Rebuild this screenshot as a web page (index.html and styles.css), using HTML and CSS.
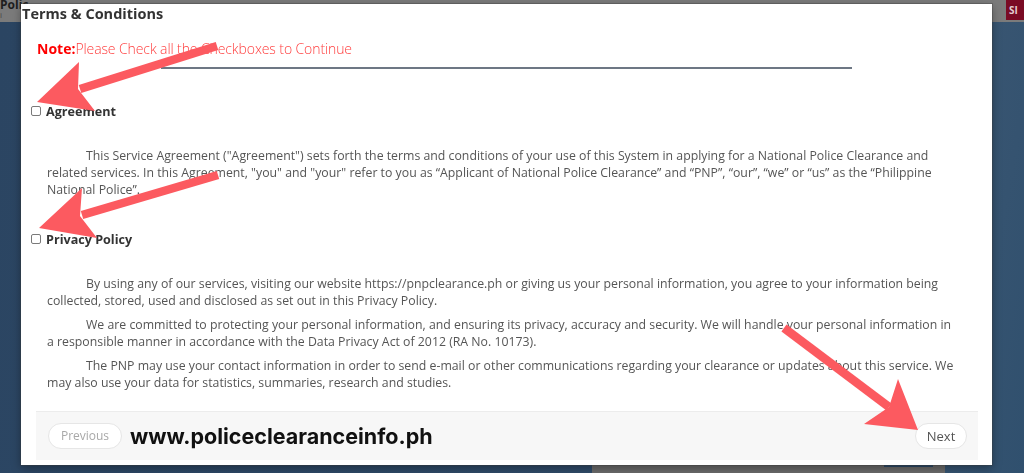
FILE: index.html
```html
<!DOCTYPE html>
<html lang="en">
<head>
<meta charset="utf-8">
<title>Terms &amp; Conditions</title>
<link rel="stylesheet" href="styles.css">
</head>
<body>
<div class="page">
  <header class="topbar">
    <div class="brand">Polic<span class="brand-sub">i</span></div>
    <button class="signin">SI</button>
  </header>
  <main class="backdrop-content">
    <div class="bg-card">
      <span class="bg-label">Middle Name</span>
      <span class="bg-insert">Insert N</span>
    </div>
  </main>
</div>

<div class="modal">
  <h4 class="modal-title">Terms &amp; Conditions</h4>
  <p class="note"><b>Note:</b><span class="note-text">Please Check all the Checkboxes to Continue</span></p>
  <div class="rule"></div>

  <label class="check-row first"><input type="checkbox" class="box"><span>Agreement</span></label>
  <div class="terms">
    <p>This Service Agreement ("Agreement") sets forth the terms and conditions of your use of this System in applying for a National Police Clearance and related services. In this Agreement, "you" and "your" refer to you as “Applicant of National Police Clearance” and “PNP”, “our”, “we” or “us” as the “Philippine National Police”.</p>
  </div>

  <label class="check-row second"><input type="checkbox" class="box"><span>Privacy Policy</span></label>
  <div class="terms">
    <p>By using any of our services, visiting our website https://pnpclearance.ph or giving us your personal information, you agree to your information being collected, stored, used and disclosed as set out in this Privacy Policy.</p>
    <p>We are committed to protecting your personal information, and ensuring its privacy, accuracy and security. We will handle your personal information in a responsible manner in accordance with the Data Privacy Act of 2012 (RA No. 10173).</p>
    <p>The PNP may use your contact information in order to send e-mail or other communications regarding your clearance or updates about this service. We may also use your data for statistics, summaries, research and studies.</p>
  </div>

  <div class="modal-footer">
    <div class="footer-left">
      <button class="pill prev">Previous</button>
      <span class="watermark">www.policeclearanceinfo.ph</span>
    </div>
    <button class="pill next">Next</button>
  </div>
</div>

<svg class="arrows" width="1024" height="473" viewBox="0 0 1024 473" aria-hidden="true">
  <g fill="#fc5a60" stroke="none">
    <line x1="217" y1="46" x2="80" y2="89" stroke="#fc5a60" stroke-width="8.5"/>
    <polygon points="37,102 95,111 78,89 79,62"/>
    <line x1="218" y1="175" x2="82" y2="215" stroke="#fc5a60" stroke-width="8.5"/>
    <polygon points="39,228 97,238 80,216 82,188"/>
    <line x1="784" y1="328" x2="889" y2="407" stroke="#fc5a60" stroke-width="8.5"/>
    <polygon points="918,430 864,424 889,407 898,379"/>
  </g>
</svg>
</body>
</html>
```

FILE: styles.css
```css
html, body {
  margin: 0;
  padding: 0;
  width: 1024px;
  height: 473px;
  overflow: hidden;
  font-family: "Open Sans", "Liberation Sans", Arial, sans-serif;
}

.page {
  display: flex;
  flex-direction: column;
  height: 473px;
}

.topbar {
  height: 34px;
  background: #7b7b7b;
  display: flex;
  justify-content: space-between;
  align-items: flex-start;
}

.brand {
  font-weight: 700;
  font-size: 12px;
  line-height: 11px;
  color: #1e1e1e;
  display: flex;
  flex-direction: column;
  margin-top: -1px;
}

.brand-sub {
  font-size: 8px;
  font-weight: 400;
  color: #444;
  line-height: 10px;
}

.signin {
  margin: 0;
  width: 18px;
  height: 20px;
  padding: 0 0 0 3px;
  border: 0;
  background: #7a0a24;
  color: #e3cdd2;
  font: 700 10px/20px "Open Sans", sans-serif;
  overflow: hidden;
  white-space: nowrap;
  text-align: left;
}

.backdrop-content {
  flex: 1;
  background: linear-gradient(100deg, #2b4562 0%, #2f4b69 60%, #3a5672 88%, #30506e 100%);
  display: flex;
  align-items: flex-start;
}

.bg-card {
  margin: 431px 0 0 592px;
  width: 353px;
  height: 20px;
  background: #6b6b6b;
  display: flex;
  justify-content: space-between;
  align-items: flex-start;
  padding: 0 12px 0 11px;
  box-sizing: border-box;
}

.bg-label {
  font: 700 12px/12px "Open Sans", sans-serif;
  color: #262626;
  margin-top: 1px;
}

.bg-insert {
  background: #2c4968;
  color: #8193a8;
  font: 400 11px/12px "Open Sans", sans-serif;
  padding: 1px 4px;
  margin-top: 0;
}

/* Modal */
.modal {
  position: fixed;
  left: 21px;
  top: 4px;
  width: 971px;
  height: 461px;
  background: #fff;
  box-shadow: 0 0 0 1px rgba(60, 60, 60, 0.35), 0 3px 9px rgba(0, 0, 0, 0.35);
  display: flex;
  flex-direction: column;
  box-sizing: border-box;
}

.modal-title {
  margin: 0;
  padding-left: 1px;
  font: 700 14.5px/20px "Open Sans", sans-serif;
  color: #333;
}

.note {
  margin: 15px 0 0 0;
  padding-left: 16px;
  font-size: 14px;
  line-height: 20px;
  color: #ff0000;
}

.note b {
  font-weight: 700;
}

.note-text {
  font-weight: 300;
  font-size: 14px;
  letter-spacing: -0.1px;
  color: #ff3d3d;
}

.rule {
  margin: 8px auto 0;
  width: 691px;
  height: 2px;
  background: #6d7784;
}

.check-row {
  display: flex;
  align-items: center;
  gap: 5px;
  padding-left: 10px;
  font: 700 12.6px/17px "Open Sans", sans-serif;
  color: #333;
}

.check-row.first {
  margin-top: 34px;
}

.check-row.second {
  margin-top: 26px;
}

.box {
  appearance: none;
  -webkit-appearance: none;
  margin: 0;
  width: 10px;
  height: 10px;
  border: 1px solid #7a7a7a;
  border-radius: 2px;
  background: #fff;
  box-sizing: border-box;
  position: relative;
  top: -1px;
}

.terms {
  margin-top: 27px;
  padding-left: 26px;
  width: 912px;
  font-size: 12.3px;
  line-height: 17px;
  color: #555;
}

.terms p {
  margin: 0 0 7px 0;
  text-indent: 39px;
}

.modal-footer {
  margin: auto 14px 5px 15px;
  height: 49px;
  box-sizing: border-box;
  border-top: 1px solid #ececec;
  background: #f7f7f7;
  display: flex;
  justify-content: space-between;
  align-items: center;
  padding: 0 11px 1px 12px;
}

.footer-left {
  display: flex;
  align-items: center;
  gap: 8px;
}

.pill {
  height: 26px;
  border: 1px solid #e6e6e6;
  border-radius: 13px;
  background: #fff;
  font-family: "Open Sans", sans-serif;
  padding: 0;
  box-sizing: border-box;
}

.prev {
  width: 74px;
  font-size: 12px;
  color: #a8a8a8;
}

.next {
  width: 52px;
  font-size: 13px;
  color: #555;
}

.watermark {
  font: 700 21.5px/24px Inter, "Open Sans", sans-serif;
  color: #111;
  letter-spacing: 0;
}

.arrows {
  position: fixed;
  left: 0;
  top: 0;
  pointer-events: none;
}
```
